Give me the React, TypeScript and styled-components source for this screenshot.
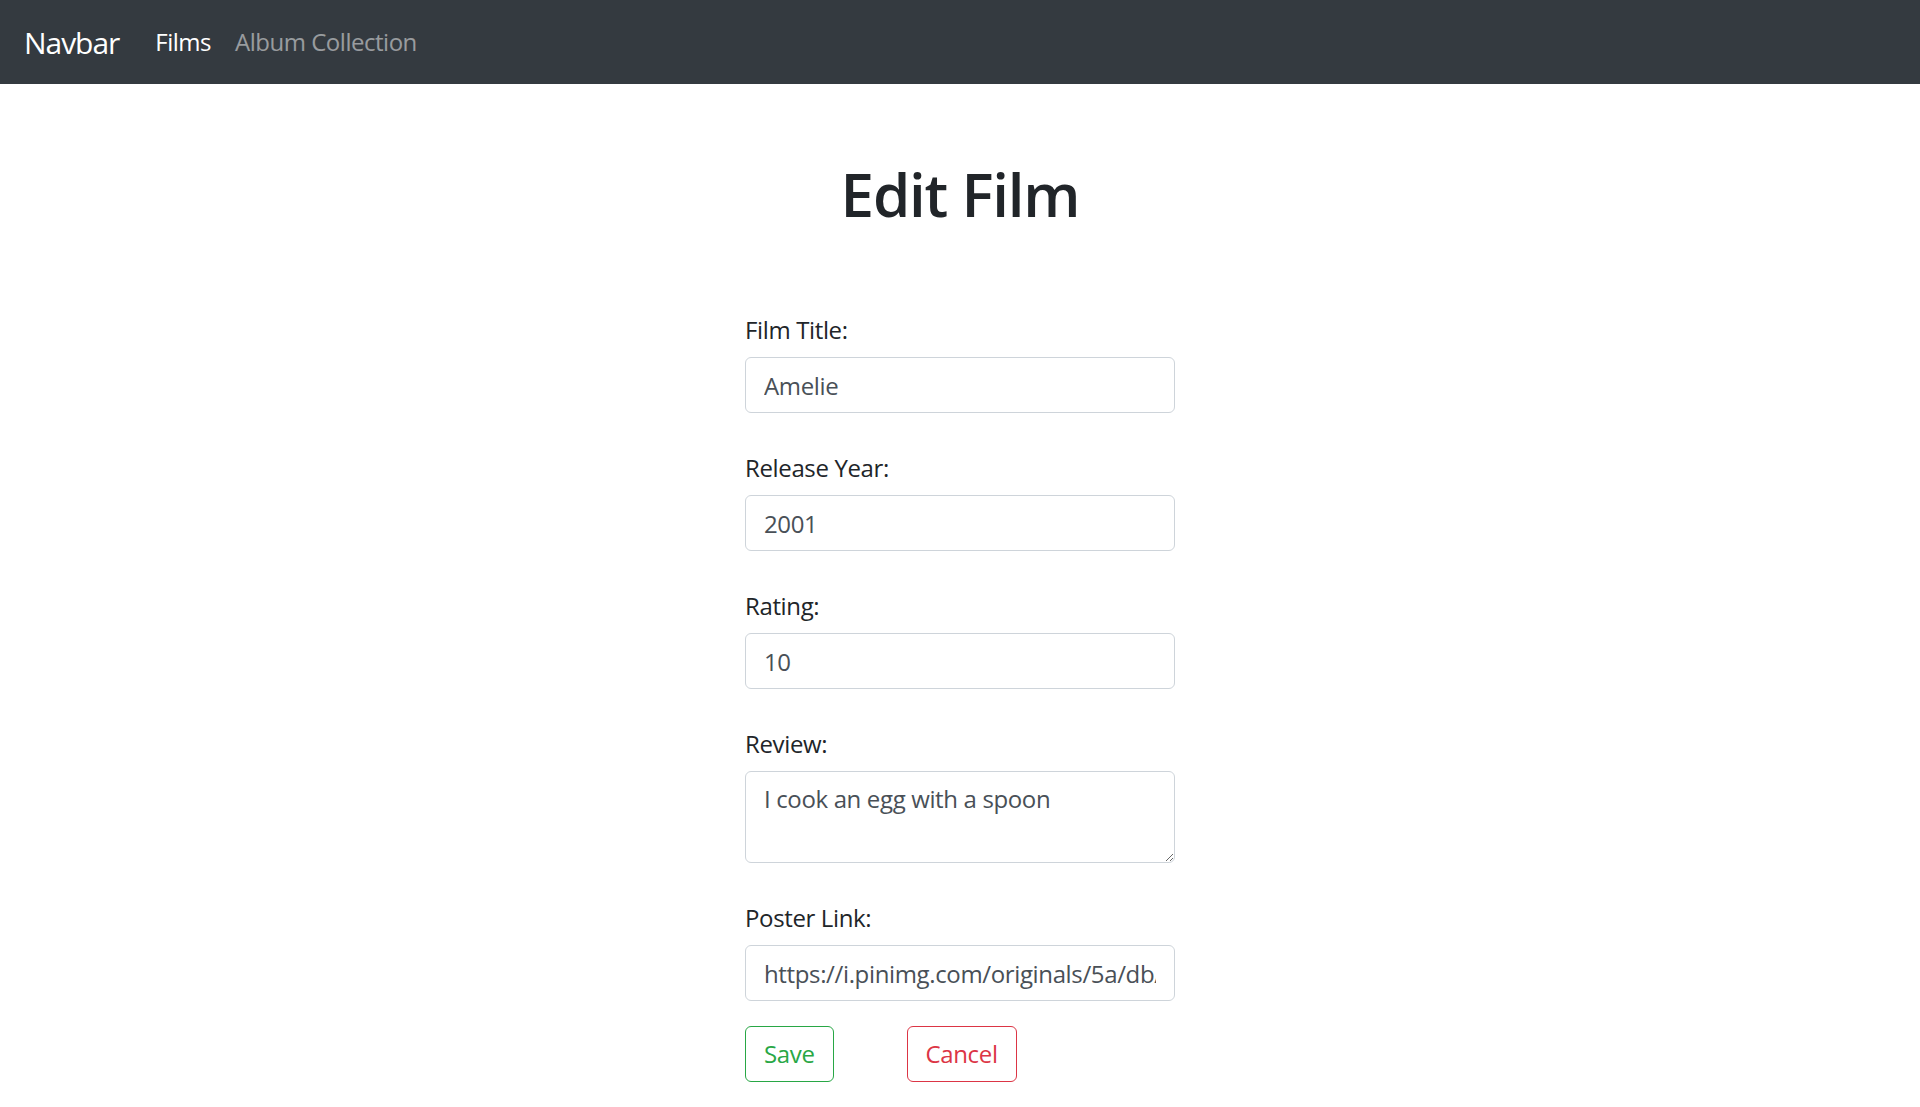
import React from "react";
import styled, { createGlobalStyle } from "styled-components";

const Global = createGlobalStyle`
  * { box-sizing: border-box; }
  html, body { margin: 0; padding: 0; }
  body {
    font-family: "Open Sans", "Noto Sans", sans-serif;
    font-size: 24px;
    line-height: 1.5;
    letter-spacing: -0.015em;
    color: #212529;
    background: #fff;
  }
`;

const NavBar = styled.nav`
  display: flex;
  align-items: center;
  height: 84px;
  padding: 12px 24px;
  background: #343a40;
`;

const Brand = styled.a`
  font-size: 30px;
  line-height: 45px;
  padding: 7.5px 0;
  margin-right: 24px;
  letter-spacing: -0.035em;
  color: #fff;
  text-decoration: none;
`;

const NavLinks = styled.div`
  display: flex;
`;

const NavLink = styled.a<{ $active?: boolean }>`
  padding: 12px;
  line-height: 36px;
  letter-spacing: -0.02em;
  color: ${(p) => (p.$active ? "#fff" : "rgba(255,255,255,0.5)")};
  text-decoration: none;
`;

const Main = styled.main`
  display: flex;
  flex-direction: column;
  align-items: center;
  padding-top: 74px;
`;

const Title = styled.h1`
  margin: 0;
  font-size: 60px;
  line-height: 72px;
  font-weight: 600;
  letter-spacing: -0.02em;
  color: #212529;
`;

const Form = styled.form`
  width: 430px;
  margin-top: 79px;
  display: flex;
  flex-direction: column;
`;

const Group = styled.div`
  display: flex;
  flex-direction: column;
  & + & {
    margin-top: 34px;
  }
`;

const Label = styled.label`
  display: block;
  line-height: 36px;
  padding-top: 3px;
  margin-bottom: 9px;
  color: #212529;
`;

const fieldCss = `
  display: block;
  width: 100%;
  padding: 9px 18px;
  font-family: inherit;
  font-size: 24px;
  line-height: 36px;
  letter-spacing: -0.015em;
  color: #495057;
  background: #fff;
  border: 1px solid #ced4da;
  border-radius: 6px;
  outline: none;
`;

const Input = styled.input`
  ${fieldCss}
  height: 56px;
`;

const TextArea = styled.textarea`
  ${fieldCss}
  height: 92px;
  resize: vertical;
  overflow: auto;
`;

const Actions = styled.div`
  display: flex;
  gap: 73px;
  margin-top: 25px;
`;

const OutlineButton = styled.button<{ $color: string }>`
  font-family: inherit;
  font-size: 24px;
  line-height: 36px;
  letter-spacing: -0.015em;
  padding: 9px 18px;
  border: 1px solid ${(p) => p.$color};
  border-radius: 6px;
  background: transparent;
  color: ${(p) => p.$color};
  cursor: pointer;
`;

export default function App() {
  return (
    <>
      <Global />
      <NavBar>
        <Brand href="#">Navbar</Brand>
        <NavLinks>
          <NavLink href="#" $active>
            Films
          </NavLink>
          <NavLink href="#">Album Collection</NavLink>
        </NavLinks>
      </NavBar>
      <Main>
        <Title>Edit Film</Title>
        <Form onSubmit={(e) => e.preventDefault()}>
          <Group>
            <Label>Film Title:</Label>
            <Input defaultValue="Amelie" />
          </Group>
          <Group>
            <Label>Release Year:</Label>
            <Input defaultValue="2001" />
          </Group>
          <Group>
            <Label>Rating:</Label>
            <Input defaultValue="10" />
          </Group>
          <Group>
            <Label>Review:</Label>
            <TextArea rows={2} defaultValue="I cook an egg with a spoon" />
          </Group>
          <Group>
            <Label>Poster Link:</Label>
            <Input defaultValue="https://i.pinimg.com/originals/5a/db/8e/5adb8e2ef6c0e0d5b1f3e0c3c8e6a5b4.jpg" />
          </Group>
          <Actions>
            <OutlineButton type="button" $color="#28a745">
              Save
            </OutlineButton>
            <OutlineButton type="button" $color="#dc3545">
              Cancel
            </OutlineButton>
          </Actions>
        </Form>
      </Main>
    </>
  );
}
